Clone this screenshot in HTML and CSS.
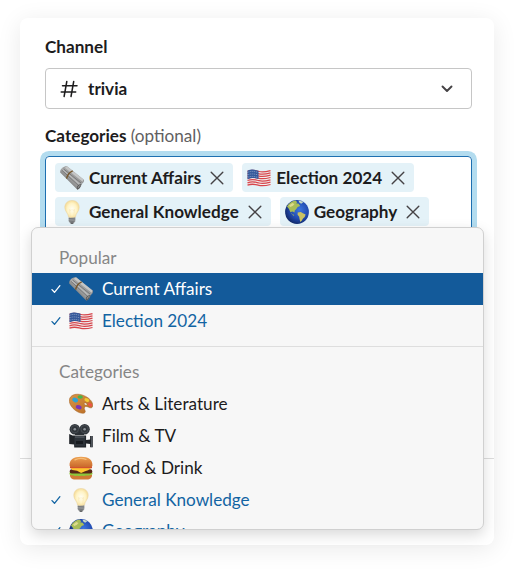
FILE: index.html
```
<!DOCTYPE html>
<html lang="en">
<head>
<meta charset="utf-8">
<title>Trivia settings</title>
<link rel="stylesheet" href="styles.css">
</head>
<body>
<svg class="defs" aria-hidden="true">
  <defs>
    <linearGradient id="roll" x1="0" y1="1" x2="1" y2="0"><stop offset="0.25" stop-color="#6b6c6d"/><stop offset="0.5" stop-color="#a9aaaa"/><stop offset="0.75" stop-color="#858687"/></linearGradient>
    <radialGradient id="glow" cx="0.5" cy="0.5" r="0.55"><stop offset="0" stop-color="#fffef3"/><stop offset="0.6" stop-color="#fff3c4"/><stop offset="1" stop-color="#f3d68e"/></radialGradient>
    <radialGradient id="sea" cx="0.6" cy="0.4" r="0.65"><stop offset="0" stop-color="#3c76e0"/><stop offset="0.6" stop-color="#2149ae"/><stop offset="1" stop-color="#102765"/></radialGradient>
    <linearGradient id="bun" x1="0" y1="0" x2="0" y2="1"><stop offset="0" stop-color="#eda152"/><stop offset="1" stop-color="#c9682b"/></linearGradient>
    <linearGradient id="wood" x1="0" y1="0" x2="1" y2="1"><stop offset="0" stop-color="#da9446"/><stop offset="1" stop-color="#b86c25"/></linearGradient>
  </defs>
  <symbol id="news" viewBox="0 0 24 24">
    <path d="M.2 6.400C0 3.200 3 .2 7 .300L23.600 13.500c1.200 1.500-.5 4-2 4.600-.7 3.100-2.800 5.600-4.400 5.500z" fill="url(#roll)"/>
    <path d="M7 .300l16.600 13.200-1 2.200L4.800 1.800z" fill="#c5c6c6"/>
    <path d="M3.600 3l17.400 14M2 4.400l17 15.600" fill="none" stroke="#656667" stroke-width=".7"/>
    <path d="M2.600 3.700l17.400 14.800" fill="none" stroke="#c2c3c3" stroke-width=".8"/>
    <path d="M17.200 23.600c-1.300-2.200.5-5.600 4.400-5.500-.7 3.100-2.800 5.600-4.400 5.500z" fill="#5a5b5c"/>
    <path d="M18.200 21.800c.2-1.400 1-2.100 2.200-2.200" fill="none" stroke="#bbb" stroke-width=".7"/>
    <path d="M12.700 4.900C9.600 6.300 7.200 9 6.600 12.700" fill="none" stroke="#75582f" stroke-width="1.400"/>
  </symbol>
  <symbol id="flag" viewBox="0 0 24 24">
    <path d="M.5 4.700C6 2.500 9 4.300 12 4.900s6.500.4 11.500-.9v14.700c-5 1.500-8.500 1.400-11.500.8s-6-1.900-11.500.5z" fill="#f1eeee"/>
    <path d="M.5 5.300C6 3.100 9 4.900 12 5.500s6.500.4 11.500-.9M.5 7.600c5.500-2.200 8.500-.4 11.500.2s6.500.4 11.500-.9M.5 9.900c5.500-2.200 8.500-.4 11.500.2s6.500.4 11.500-.9M.5 12.200c5.500-2.200 8.500-.4 11.500.2s6.500.4 11.500-.9M.5 14.500c5.500-2.200 8.500-.4 11.500.2s6.500.4 11.500-.9M.5 16.800c5.500-2.200 8.500-.4 11.500.2s6.500.4 11.500-.9M.5 19.200c5.500-2.200 8.500-.4 11.500.2s6.500.4 11.500-.9" fill="none" stroke="#d7454c" stroke-width="1.250"/>
    <path d="M.5 4.700C6 2.500 8.500 4.200 11.500 4.800v8.100c-3-.6-5.500-1.900-11 .3z" fill="#34599b"/>
    <path d="M1.500 6c3-1 6-.6 9.500.4M1.500 8.500c3-1 6-.6 9.500.4M1.500 11c3-1 6-.6 9.500.4" fill="none" stroke="#b7c4dc" stroke-width=".8" stroke-dasharray=".8 1.200"/>
  </symbol>
  <symbol id="bulb" viewBox="0 0 24 24">
    <path d="M12 .4c-4.300 0-7.200 3-7.200 6.900 0 4.300 3.300 5.600 3.800 9.900 1.500 1 5.300 1 6.800 0 .5-4.300 3.800-5.600 3.800-9.900C19.200 3.400 16.300.4 12 .4z" fill="url(#glow)" stroke="#e9d09a" stroke-width=".5"/>
    <path d="M10.300 16.500L9.500 9.500l1.500 1 1-1 1 1 1.500-1-.8 7" fill="none" stroke="#f6e3b0" stroke-width=".5"/>
    <path d="M8.700 17.200c2 .7 4.600.7 6.600 0v4.200L13.500 23.500h-3L8.700 21.400z" fill="#a3a5a6"/>
    <path d="M8.700 18.600l6.600-.4M8.700 20.200l6.600-.4M9.300 21.700l5.200-.3" stroke="#66696b" stroke-width=".7"/>
    <path d="M10.300 22.600h3.400l-.6 1.100h-2.200z" fill="#46484a"/>
  </symbol>
  <symbol id="globe" viewBox="0 0 24 24">
    <circle cx="12" cy="12" r="11.900" fill="url(#sea)"/>
    <path d="M2 6.500C4 3 7.500.7 10.500.5l1.800 1.700-1.200 1.100 2.600.5 1.500 2.300-2.500.8-1.400 2.200-1.500 1.300-.4 2.200-1.700-1.200-2 .6.700 2 1.800.3 1.100 1.500-1.200-.2L5.200 11.800 4 9z" fill="#a9bd58"/>
    <path d="M4 5.500l3.300-2.600 2.200 1-1.800 2.200-2.500 1z" fill="#dedb8c"/>
    <path d="M13.500.7c1.800-.1 3.600.5 5 1.400l-2.300 1.700-1.700-1z" fill="#c7d8c3"/>
    <path d="M12.700 12.400l3.100-.5 2.100 1.300 2.700 1.200-.9 2.700-1.700 1.400-1.100 2-1.600 1.500-.7-2.700-.4-2.600-1.600-2z" fill="#c9c263"/>
  </symbol>
  <symbol id="palette" viewBox="0 0 24 24">
    <path d="M.4 7.500C1.300 3.400 5.500 1.600 10.800 2.400c6.500 1 12.700 5.800 13 10.500.2 2.900-1.900 3.700-4.200 2.300-2.300-1.300-4.400-.8-4.300 1.100.1 1.700 1.500 2.600.8 4-.7 1.300-3.200 1.300-6 .2C4.300 18.200-.4 12.200.4 7.500zM15.500 12.500c1 .9 2.400.8 2.600 0 .2-1-1.500-1.900-2.500-1.500-.5.200-.5 1-.1 1.500z" fill="url(#wood)" fill-rule="evenodd" stroke="#a15e21" stroke-width=".5"/>
    <ellipse cx="6.200" cy="8" rx="3" ry="2.100" fill="#2da4d4" transform="rotate(25 6.200 8)"/>
    <ellipse cx="11.200" cy="5" rx="2.700" ry="1.800" fill="#47b64a"/>
    <ellipse cx="17.800" cy="8" rx="2.600" ry="1.700" fill="#f1cc31" transform="rotate(30 17.800 8)"/>
    <ellipse cx="21.100" cy="12.700" rx="2.200" ry="1.500" fill="#ed5449" transform="rotate(35 21.100 12.700)"/>
    <ellipse cx="9.700" cy="15.200" rx="3" ry="2" fill="#7b35b7" transform="rotate(20 9.700 15.200)"/>
  </symbol>
  <symbol id="camera" viewBox="0 0 24 24">
    <rect x="6" y="5" width="9" height="6" fill="#2b3035"/>
    <circle cx="5.800" cy="5.300" r="5.200" fill="#30353a"/><circle cx="15.600" cy="5.300" r="5.200" fill="#30353a"/>
    <circle cx="5.800" cy="5.100" r="3.700" fill="none" stroke="#4d5359" stroke-width=".8"/><circle cx="15.600" cy="5.100" r="3.700" fill="none" stroke="#4d5359" stroke-width=".8"/>
    <circle cx="5.800" cy="5.300" r="1.300" fill="#8a9095"/><circle cx="15.600" cy="5.300" r="1.300" fill="#8a9095"/>
    <path d="M.2 10l3.300 1.500h13.600v4.500l4-.4V12h2.700v11.200h-2.700v-3.300l-4-.4v4H5.200v-3L.2 20z" fill="#202428"/>
    <path d="M5.400 12.500h10.800v9.700H5.400z" fill="#2d3339"/>
    <path d="M7 17h7v3H7z" fill="#171b1f"/>
    <path d="M22.700 12v11.200M6 13h9.500" stroke="#6a7178" stroke-width=".8"/>
  </symbol>
  <symbol id="burger" viewBox="0 0 24 24">
    <path d="M1 18.500h22c.3 3.200-2 5-5 5H6c-3 0-5.300-1.800-5-5z" fill="#cf7a35"/>
    <path d="M.8 16.200c2-1.200 20.400-1.200 22.400 0 .9 1.800-.2 2.700-1.700 2.500-1.600 1.500-3.100.3-4.700.9-1.700.9-3.200-.3-4.800.2-1.700.7-3.200-.5-4.900.1-1.600.5-3-.7-4.600-.6-1.700-.2-2.600-1.200-1.700-3.100z" fill="#8cc63a"/>
    <rect x=".7" y="13.200" width="22.600" height="4.300" rx="2.100" fill="#582616"/>
    <path d="M1.100 11.500h21.800l-3.800 2.800-3 1-4 1.700-4-2.200-4.800-.7z" fill="#ffc52f"/>
    <path d="M1 10.200h22v2H1z" fill="#d44b32"/>
    <path d="M.6 9.500C.2 4.200 4.200.8 12 .8s11.800 3.400 11.400 8.700c0 1.300-1.500 1.700-3 1.700H3.600c-1.500 0-3-.4-3-1.700z" fill="url(#bun)"/>
    <path d="M6 3.900c3-1.500 8-1.700 11-.4" fill="none" stroke="#f5bd78" stroke-width="1.200" stroke-linecap="round"/>
  </symbol>
  <symbol id="x" viewBox="0 0 14 14"><path d="M1.200 1.200l11.600 11.600M12.800 1.200L1.200 12.800" fill="none" stroke="currentColor" stroke-width="1.400" stroke-linecap="round"/></symbol>
  <symbol id="check" viewBox="0 0 10 10"><path d="M1 5.600l2.500 2.700L8.900 1.700" fill="none" stroke="currentColor" stroke-width="1.300" stroke-linecap="round" stroke-linejoin="round"/></symbol>
</svg>

<main class="card">
  <div class="body">
    <div class="label">Channel</div>
    <div class="select">
      <svg class="hash" viewBox="0 0 18 18"><path d="M6.800 1.500L4.100 16.500M13.700 1.500L11 16.500M2.500 5.700h14.500M1.200 12.100h14.500" fill="none" stroke="currentColor" stroke-width="1.500" stroke-linecap="round"/></svg>
      <span class="value">trivia</span>
      <svg class="chevron" viewBox="0 0 12 8"><path d="M1.500 1.500L6 6l4.500-4.500" fill="none" stroke="currentColor" stroke-width="1.900" stroke-linecap="round" stroke-linejoin="round"/></svg>
    </div>
    <div class="label categories">Categories <span class="optional">(optional)</span></div>
    <div class="field">
      <div class="tags">
        <span class="tag"><svg class="emoji"><use href="#news"/></svg><span class="name">Current Affairs</span><svg class="close"><use href="#x"/></svg></span>
        <span class="tag"><svg class="emoji"><use href="#flag"/></svg><span class="name">Election 2024</span><svg class="close"><use href="#x"/></svg></span>
        <span class="tag"><svg class="emoji"><use href="#bulb"/></svg><span class="name">General Knowledge</span><svg class="close"><use href="#x"/></svg></span>
        <span class="tag"><svg class="emoji"><use href="#globe"/></svg><span class="name">Geography</span><svg class="close"><use href="#x"/></svg></span>
      </div>
      <div class="menu">
        <div class="group">Popular</div>
        <div class="option chosen active"><svg class="check"><use href="#check"/></svg><svg class="emoji"><use href="#news"/></svg><span>Current Affairs</span></div>
        <div class="option chosen"><svg class="check"><use href="#check"/></svg><svg class="emoji"><use href="#flag"/></svg><span>Election 2024</span></div>
        <div class="divider"></div>
        <div class="group second">Categories</div>
        <div class="option"><svg class="emoji"><use href="#palette"/></svg><span>Arts &amp; Literature</span></div>
        <div class="option"><svg class="emoji"><use href="#camera"/></svg><span>Film &amp; TV</span></div>
        <div class="option"><svg class="emoji"><use href="#burger"/></svg><span>Food &amp; Drink</span></div>
        <div class="option chosen"><svg class="check"><use href="#check"/></svg><svg class="emoji"><use href="#bulb"/></svg><span>General Knowledge</span></div>
        <div class="option chosen last"><svg class="check"><use href="#check"/></svg><svg class="emoji"><use href="#globe"/></svg><span>Geography</span></div>
      </div>
    </div>
  </div>
  <footer class="footer"></footer>
</main>
</body>
</html>
```
FILE: styles.css
```
* { box-sizing: border-box; }
body {
  margin: 0;
  padding: 18px 24px 26px 20px;
  height: 571px;
  overflow: hidden;
  background: #fff;
  color: #1d1c1d;
  font: 17.15px/24px Lato, "Liberation Sans", sans-serif;
}
.defs { position: absolute; width: 0; height: 0; }
.card {
  display: flex;
  flex-direction: column;
  height: 527px;
  border-radius: 8px;
  background: #fff;
  box-shadow: 0 4px 24px rgba(0, 0, 0, .085);
}
.body { flex: 1; padding: 17px 22px 0 25px; }
.footer { height: 87px; border-top: 1px solid #ddd; }
.label { font-weight: 700; }
.select {
  display: flex;
  align-items: center;
  height: 41px;
  margin-top: 9px;
  padding: 0 18px 0 14px;
  border: 1px solid #c6c6c6;
  border-radius: 4px;
  font-weight: 700;
}
.hash { width: 18px; height: 18px; }
.value { margin-left: 10px; }
.chevron { width: 12px; height: 8px; margin-left: auto; color: #454245; }
.categories { margin-top: 15px; }
.optional { font-weight: 400; color: #616061; }
.field {
  position: relative;
  height: 112px;
  margin-top: 8px;
  padding: 6px 9px;
  border: 1px solid #1d6fb0;
  border-radius: 4px;
  box-shadow: 0 0 0 5px #b3dcef;
}
.tags { display: flex; flex-wrap: wrap; gap: 5px 9px; }
.tag {
  display: flex;
  align-items: center;
  height: 29px;
  padding: 0 9px 0 5px;
  border-radius: 4px;
  background: #e4f2f8;
  font-weight: 700;
}
.emoji { flex: none; width: 24px; height: 24px; }
.name { margin-left: 5px; white-space: nowrap; }
.close { width: 14px; height: 14px; margin-left: 9px; color: #454245; }
.menu {
  position: absolute;
  top: 70px;
  left: -15px;
  width: 453px;
  height: 303px;
  padding-top: 18px;
  overflow: hidden;
  border: 1px solid #d0d0d0;
  border-radius: 7px;
  background: #f7f7f7;
  box-shadow: 0 5px 14px rgba(0, 0, 0, .15);
}
.group { height: 27px; padding-left: 27px; color: #868686; }
.option { display: flex; align-items: center; height: 32px; padding-left: 37px; }
.option span { margin-left: 9px; }
.check { width: 10px; height: 10px; margin: 0 8px 0 -18px; }
.chosen { color: #1264a3; }
.active { background: #135a9a; color: #fff; }
.last { height: 30px; }
.divider { height: 1px; margin-top: 9px; background: #dedede; }
.second { margin-top: 13px; height: 28px; }
```
